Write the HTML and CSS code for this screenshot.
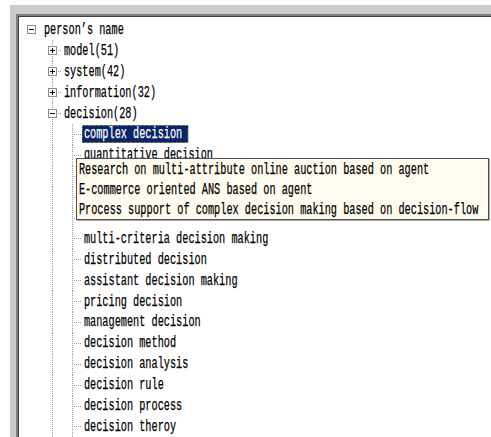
FILE: index.html
```html
<!DOCTYPE html>
<html lang="en">
<head>
<meta charset="utf-8">
<title>Keyword tree</title>
<link rel="stylesheet" href="styles.css">
</head>
<body>
<div class="panel">
  <div class="frame">
    <ul class="tree">
      <li class="row">
        <span class="joint root"><svg class="box" width="9" height="9" viewBox="0 0 9 9"><rect x=".5" y=".5" width="8" height="8" fill="#fff" stroke="#8c8c8c"/><path d="M2 4.5h5" stroke="#000"/></svg></span>
        <span class="label">person’s name</span>
      </li>
      <li class="row">
        <span class="indent"></span>
        <span class="joint tee"><svg class="box" width="9" height="9" viewBox="0 0 9 9"><rect x=".5" y=".5" width="8" height="8" fill="#fff" stroke="#8c8c8c"/><path d="M2 4.5h5M4.5 2v5" stroke="#000"/></svg></span>
        <span class="label">model(51)</span>
      </li>
      <li class="row">
        <span class="indent"></span>
        <span class="joint tee"><svg class="box" width="9" height="9" viewBox="0 0 9 9"><rect x=".5" y=".5" width="8" height="8" fill="#fff" stroke="#8c8c8c"/><path d="M2 4.5h5M4.5 2v5" stroke="#000"/></svg></span>
        <span class="label">system(42)</span>
      </li>
      <li class="row">
        <span class="indent"></span>
        <span class="joint tee"><svg class="box" width="9" height="9" viewBox="0 0 9 9"><rect x=".5" y=".5" width="8" height="8" fill="#fff" stroke="#8c8c8c"/><path d="M2 4.5h5M4.5 2v5" stroke="#000"/></svg></span>
        <span class="label">information(32)</span>
      </li>
      <li class="row">
        <span class="indent"></span>
        <span class="joint tee"><svg class="box" width="9" height="9" viewBox="0 0 9 9"><rect x=".5" y=".5" width="8" height="8" fill="#fff" stroke="#8c8c8c"/><path d="M2 4.5h5" stroke="#000"/></svg></span>
        <span class="label">decision(28)</span>
      </li>
      <li class="row"><span class="indent"></span><span class="guide"></span><span class="joint tee"></span><span class="label selected">complex decision</span></li>
      <li class="row"><span class="indent"></span><span class="guide"></span><span class="joint tee"></span><span class="label">quantitative decision</span></li>
      <li class="row"><span class="indent"></span><span class="guide"></span><span class="joint tee"></span></li>
      <li class="row"><span class="indent"></span><span class="guide"></span><span class="joint tee"></span></li>
      <li class="row"><span class="indent"></span><span class="guide"></span><span class="joint tee"></span></li>
      <li class="row"><span class="indent"></span><span class="guide"></span><span class="joint tee"></span><span class="label">multi-criteria decision making</span></li>
      <li class="row"><span class="indent"></span><span class="guide"></span><span class="joint tee"></span><span class="label">distributed decision</span></li>
      <li class="row"><span class="indent"></span><span class="guide"></span><span class="joint tee"></span><span class="label">assistant decision making</span></li>
      <li class="row"><span class="indent"></span><span class="guide"></span><span class="joint tee"></span><span class="label">pricing decision</span></li>
      <li class="row"><span class="indent"></span><span class="guide"></span><span class="joint tee"></span><span class="label">management decision</span></li>
      <li class="row"><span class="indent"></span><span class="guide"></span><span class="joint tee"></span><span class="label">decision method</span></li>
      <li class="row"><span class="indent"></span><span class="guide"></span><span class="joint tee"></span><span class="label">decision analysis</span></li>
      <li class="row"><span class="indent"></span><span class="guide"></span><span class="joint tee"></span><span class="label">decision rule</span></li>
      <li class="row"><span class="indent"></span><span class="guide"></span><span class="joint tee"></span><span class="label">decision process</span></li>
      <li class="row"><span class="indent"></span><span class="guide"></span><span class="joint tee"></span><span class="label">decision theroy</span></li>
    </ul>
    <div class="tooltip">
      <p>Research on multi-attribute online auction based on agent</p>
      <p>E-commerce oriented ANS based on agent</p>
      <p>Process support of complex decision making based on decision-flow</p>
    </div>
  </div>
</div>
</body>
</html>
```
FILE: styles.css
```css
html, body {
  margin: 0;
  height: 100%;
  background: #fff;
  overflow: hidden;
}

/* grey dialog surface around the tree control */
.panel {
  box-sizing: border-box;
  height: calc(100% - 5px);
  margin: 5px 0 0 10px;
  padding: 9px 0 0 6px;
  background: #cbcbcb;
}

/* sunken white client area */
.frame {
  position: relative;
  box-sizing: border-box;
  height: 100%;
  background: #fff;
  border-top: 2px solid #808080;
  border-left: 2px solid #808080;
  box-shadow: inset 1px 1px 0 #404040;
  overflow: hidden;
}

.tree {
  list-style: none;
  margin: 0;
  padding: 3.5px 0 0 4px;
  font: 16px/18px "Liberation Mono", monospace;
  color: #000;
}

.row {
  display: flex;
  align-items: center;
  height: 20.9px;
}

/* 20px indent columns carrying the dotted connector lines */
.indent,
.guide,
.joint {
  flex: none;
  box-sizing: border-box;
  width: 20px;
  height: 100%;
  display: flex;
  align-items: center;
  padding-left: 6px;
  background-repeat: no-repeat;
}

.guide {
  background-image: repeating-linear-gradient(to bottom, #9a9a9a 0 1px, transparent 1px 2px);
  background-size: 1px 100%;
  background-position: 10px 0;
}

.joint.tee {
  background-image:
    repeating-linear-gradient(to bottom, #9a9a9a 0 1px, transparent 1px 2px),
    repeating-linear-gradient(to right, #9a9a9a 0 1px, transparent 1px 2px);
  background-size: 1px 100%, 10px 1px;
  background-position: 10px 0, 10px 10px;
}

.joint.root {
  padding-left: 5px;
}

.box {
  display: block;
  flex: none;
}

.label {
  display: inline-block;
  padding: 0 9px 0 3px;
  line-height: 18px;
  white-space: nowrap;
  transform: scaleX(.64);
  transform-origin: 0 50%;
  -webkit-text-stroke: .25px #000;
}

.selected {
  background: #0a246a;
  color: #fff;
  -webkit-text-stroke: .25px #fff;
  outline: 1px dotted #d8b040;
  outline-offset: -1px;
}

/* hover tip listing the papers under the selected keyword */
.tooltip {
  position: absolute;
  left: 58px;
  top: 142px;
  box-sizing: border-box;
  width: 413px;
  height: 62px;
  padding-top: 1px;
  background: #fffbef;
  border: 1px solid #505050;
  box-shadow: 1px 1px 0 #a8a8a8;
  font: 16px/20px "Liberation Mono", monospace;
  color: #000;
}

.tooltip p {
  margin: 0;
  padding-left: 3px;
  white-space: nowrap;
  transform: scaleX(.64);
  transform-origin: 0 50%;
  -webkit-text-stroke: .25px #000;
}
```
